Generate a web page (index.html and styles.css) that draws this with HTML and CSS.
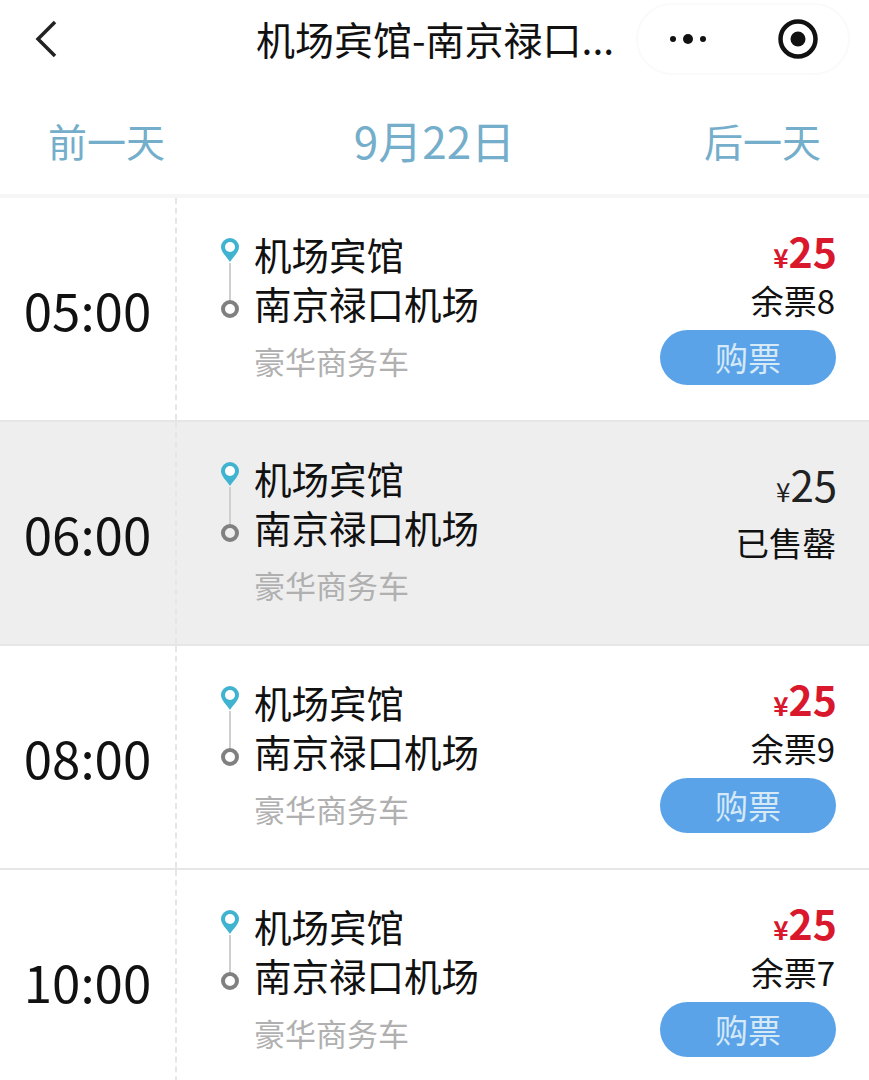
FILE: index.html
```html
<!DOCTYPE html>
<html lang="zh">
<head>
<meta charset="utf-8">
<title>机场宾馆-南京禄口机场</title>
<link rel="stylesheet" href="styles.css">
</head>
<body>
<header class="nav">
  <svg class="back" width="26" height="40" viewBox="0 0 26 40"><path d="M22 3 L5 20 L22 37" fill="none" stroke="#222" stroke-width="3.500"/></svg>
  <div class="title">机场宾馆-南京禄口...</div>
  <div class="capsule">
    <svg class="more" width="44" height="14" viewBox="0 0 44 14"><circle cx="5" cy="7" r="3" fill="#111"/><circle cx="20" cy="7" r="5" fill="#111"/><circle cx="35" cy="7" r="3" fill="#111"/></svg>
    <svg class="target" width="42" height="42" viewBox="0 0 42 42"><circle cx="21" cy="21" r="17.500" fill="none" stroke="#111" stroke-width="4.500"/><circle cx="21" cy="21" r="7.500" fill="#111"/></svg>
  </div>
</header>
<nav class="dates">
  <span>前一天</span>
  <span class="current">9月22日</span>
  <span>后一天</span>
</nav>
<main class="list">
  <section class="row">
    <div class="time">05:00</div>
    <div class="route">
      <div class="stops">
        <div class="rail">
          <svg width="20" height="26" viewBox="0 0 20 26"><path d="M10 25 C6 19 1 15 1 10 A9 9 0 0 1 19 10 C19 15 14 19 10 25Z" fill="#3fb3cf"/><circle cx="10" cy="10" r="5" fill="#fff"/></svg>
          <i class="line"></i><i class="dot"></i>
        </div>
        <div class="names"><div>机场宾馆</div><div>南京禄口机场</div></div>
      </div>
      <div class="car">豪华商务车</div>
    </div>
    <div class="buy">
      <div class="price"><small>¥</small>25</div>
      <div class="left">余票8</div>
      <div class="btn">购票</div>
    </div>
  </section>
  <section class="row sold">
    <div class="time">06:00</div>
    <div class="route">
      <div class="stops">
        <div class="rail">
          <svg width="20" height="26" viewBox="0 0 20 26"><path d="M10 25 C6 19 1 15 1 10 A9 9 0 0 1 19 10 C19 15 14 19 10 25Z" fill="#3fb3cf"/><circle cx="10" cy="10" r="5" fill="#fff"/></svg>
          <i class="line"></i><i class="dot"></i>
        </div>
        <div class="names"><div>机场宾馆</div><div>南京禄口机场</div></div>
      </div>
      <div class="car">豪华商务车</div>
    </div>
    <div class="buy">
      <div class="price off"><small>¥</small>25</div>
      <div class="gone">已售罄</div>
    </div>
  </section>
  <section class="row">
    <div class="time">08:00</div>
    <div class="route">
      <div class="stops">
        <div class="rail">
          <svg width="20" height="26" viewBox="0 0 20 26"><path d="M10 25 C6 19 1 15 1 10 A9 9 0 0 1 19 10 C19 15 14 19 10 25Z" fill="#3fb3cf"/><circle cx="10" cy="10" r="5" fill="#fff"/></svg>
          <i class="line"></i><i class="dot"></i>
        </div>
        <div class="names"><div>机场宾馆</div><div>南京禄口机场</div></div>
      </div>
      <div class="car">豪华商务车</div>
    </div>
    <div class="buy">
      <div class="price"><small>¥</small>25</div>
      <div class="left">余票9</div>
      <div class="btn">购票</div>
    </div>
  </section>
  <section class="row">
    <div class="time">10:00</div>
    <div class="route">
      <div class="stops">
        <div class="rail">
          <svg width="20" height="26" viewBox="0 0 20 26"><path d="M10 25 C6 19 1 15 1 10 A9 9 0 0 1 19 10 C19 15 14 19 10 25Z" fill="#3fb3cf"/><circle cx="10" cy="10" r="5" fill="#fff"/></svg>
          <i class="line"></i><i class="dot"></i>
        </div>
        <div class="names"><div>机场宾馆</div><div>南京禄口机场</div></div>
      </div>
      <div class="car">豪华商务车</div>
    </div>
    <div class="buy">
      <div class="price"><small>¥</small>25</div>
      <div class="left">余票7</div>
      <div class="btn">购票</div>
    </div>
  </section>
</main>
</body>
</html>
```
FILE: styles.css
```css
* { box-sizing: border-box; }
html, body { margin: 0; padding: 0; }
body {
  width: 869px;
  height: 1080px;
  overflow: hidden;
  background: #fff;
  color: #1a1a1a;
  font-family: "Noto Sans CJK SC", "Noto Sans", sans-serif;
}
.nav {
  height: 92px;
  display: flex;
  align-items: center;
  padding: 0 19px 0 33px;
  position: relative;
}
.back { margin-top: -14px; flex: none; }
.title {
  font-size: 39px;
  line-height: 50px;
  margin: -16px 0 0 197px;
  white-space: nowrap;
  color: #111;
  width: 360px;
}
.capsule {
  margin: -14px 0 0 auto;
  width: 214px;
  height: 72px;
  border: 2px solid #fafafa;
  border-radius: 36px;
  display: flex;
  align-items: center;
  padding: 0 29px 0 30px;
  justify-content: space-between;
}
.dates {
  height: 106px;
  display: flex;
  justify-content: space-between;
  align-items: center;
  padding: 0 48px 6px;
  font-size: 39px;
  line-height: 50px;
  color: #74aecb;
  border-bottom: 4px solid #f6f6f6;
}
.current { font-size: 44px; }
.row {
  height: 224px;
  display: flex;
  border-bottom: 2px solid #e6e6e6;
}
.row.sold { background: #eeeeee; }
.time {
  width: 177px;
  flex: none;
  border-right: 2px dashed #e6e6e6;
  display: flex;
  align-items: center;
  justify-content: center;
  font-size: 51px;
  color: #111;
}
.route { flex: 1; padding: 31px 0 0 43px; }
.stops { display: flex; gap: 14px; }
.rail { width: 20px; display: flex; flex-direction: column; align-items: center; padding-top: 8px; }
.rail svg { flex: none; }
.line { width: 2px; height: 37px; background: #cfcfcf; }
.dot { width: 18px; height: 18px; border: 4px solid #808080; border-radius: 50%; background: transparent; }
.names { font-size: 37.500px; line-height: 49px; color: #111; white-space: nowrap; }
.car { font-size: 31px; line-height: 40px; color: #b0b0b0; margin: 14px 0 0 34px; }
.buy {
  width: 210px;
  flex: none;
  padding: 28px 34px 0 0;
  display: flex;
  flex-direction: column;
  align-items: flex-end;
}
.price { font-size: 41px; line-height: 48px; font-weight: 700; color: #d9182d; margin-right: -2px; }
.price small { font-size: 26px; }
.price.off { font-weight: 400; color: #222; font-size: 42px; margin-top: 10px; }
.left { font-size: 33px; line-height: 40px; color: #111; margin-top: -1px; }
.gone { font-size: 33.500px; line-height: 44px; color: #111; margin: 5px -1px 0 0; }
.btn {
  width: 176px;
  height: 55px;
  margin-top: 10px;
  margin-right: -1px;
  border-radius: 28px;
  background: #5aa3e8;
  color: #d5e9f7;
  font-size: 33px;
  line-height: 55px;
  text-align: center;
}
```
